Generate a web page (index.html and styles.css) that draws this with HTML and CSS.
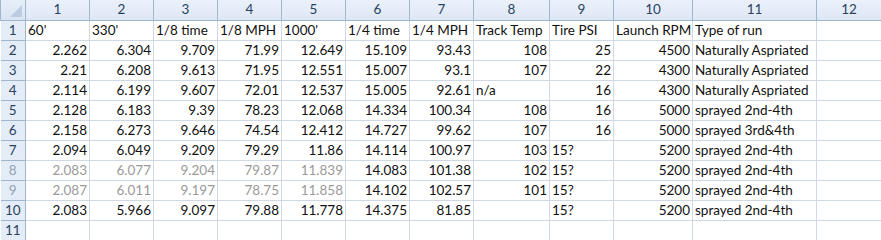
FILE: index.html
```html
<!DOCTYPE html>
<html>
<head>
<meta charset="utf-8">
<link rel="stylesheet" href="styles.css">
</head>
<body>
<table class="sheet">
<colgroup>
<col class="c-rh"><col class="c-std"><col class="c-std"><col class="c-std"><col class="c-std"><col class="c-std"><col class="c-std"><col class="c-std"><col class="c-8"><col class="c-std"><col class="c-10"><col class="c-11"><col class="c-12">
</colgroup>
<thead>
<tr class="hdr">
<th class="corner"><span class="tri"></span></th>
<th>1</th><th>2</th><th>3</th><th>4</th><th>5</th><th>6</th><th>7</th><th>8</th><th>9</th><th>10</th><th>11</th><th>12</th>
</tr>
</thead>
<tbody>
<tr><th class="rh">1</th><td class="t">60'</td><td class="t">330'</td><td class="t">1/8 time</td><td class="t">1/8 MPH</td><td class="t">1000'</td><td class="t">1/4 time</td><td class="t">1/4 MPH</td><td class="t">Track Temp</td><td class="t">Tire PSI</td><td class="t">Launch RPM</td><td class="t">Type of run</td><td></td></tr>
<tr><th class="rh">2</th><td>2.262</td><td>6.304</td><td>9.709</td><td>71.99</td><td>12.649</td><td>15.109</td><td>93.43</td><td>108</td><td>25</td><td>4500</td><td class="t">Naturally Aspriated</td><td></td></tr>
<tr><th class="rh">3</th><td>2.21</td><td>6.208</td><td>9.613</td><td>71.95</td><td>12.551</td><td>15.007</td><td>93.1</td><td>107</td><td>22</td><td>4300</td><td class="t">Naturally Aspriated</td><td></td></tr>
<tr><th class="rh">4</th><td>2.114</td><td>6.199</td><td>9.607</td><td>72.01</td><td>12.537</td><td>15.005</td><td>92.61</td><td class="t">n/a</td><td>16</td><td>4300</td><td class="t">Naturally Aspriated</td><td></td></tr>
<tr><th class="rh">5</th><td>2.128</td><td>6.183</td><td>9.39</td><td>78.23</td><td>12.068</td><td>14.334</td><td>100.34</td><td>108</td><td>16</td><td>5000</td><td class="t">sprayed 2nd-4th</td><td></td></tr>
<tr><th class="rh">6</th><td>2.158</td><td>6.273</td><td>9.646</td><td>74.54</td><td>12.412</td><td>14.727</td><td>99.62</td><td>107</td><td>16</td><td>5000</td><td class="t">sprayed 3rd&amp;4th</td><td></td></tr>
<tr><th class="rh">7</th><td>2.094</td><td>6.049</td><td>9.209</td><td>79.29</td><td>11.86</td><td>14.114</td><td>100.97</td><td>103</td><td class="t">15?</td><td>5200</td><td class="t">sprayed 2nd-4th</td><td></td></tr>
<tr class="dash"><th class="rh faded">8</th><td class="g">2.083</td><td class="g">6.077</td><td class="g">9.204</td><td class="g">79.87</td><td class="g">11.839</td><td>14.083</td><td>101.38</td><td>102</td><td class="t">15?</td><td>5200</td><td class="t">sprayed 2nd-4th</td><td></td></tr>
<tr><th class="rh faded">9</th><td class="g">2.087</td><td class="g">6.011</td><td class="g">9.197</td><td class="g">78.75</td><td class="g">11.858</td><td>14.102</td><td>102.57</td><td>101</td><td class="t">15?</td><td>5200</td><td class="t">sprayed 2nd-4th</td><td></td></tr>
<tr><th class="rh">10</th><td>2.083</td><td>5.966</td><td>9.097</td><td>79.88</td><td>11.778</td><td>14.375</td><td>81.85</td><td></td><td class="t">15?</td><td>5200</td><td class="t">sprayed 2nd-4th</td><td></td></tr>
<tr><th class="rh">11</th><td></td><td></td><td></td><td></td><td></td><td></td><td></td><td></td><td></td><td></td><td></td><td></td></tr>
</tbody>
</table>
</body>
</html>
```

FILE: styles.css
```css
html, body {
  margin: 0;
  padding: 0;
  background: #ffffff;
}

.sheet {
  border-collapse: collapse;
  table-layout: fixed;
  width: 881px;
  font-family: Lato, "Liberation Sans", sans-serif;
  font-size: 13.5px;
  color: #111;
}

.c-rh { width: 25px; }
.c-std { width: 64px; }
.c-8 { width: 76px; }
.c-10 { width: 79px; }
.c-11 { width: 124px; }
.c-12 { width: 65px; }

.sheet tr {
  height: 20px;
}

.sheet td {
  height: 19px;
  padding: 0 2px 0 2px;
  border: 1px solid #d0d7e5;
  text-align: right;
  white-space: nowrap;
  overflow: visible;
  line-height: 19px;
}

.sheet td.t {
  text-align: left;
}

.sheet td.g {
  color: #9a9a9a;
}

.hdr th {
  height: 19px;
  padding: 0;
  font-weight: normal;
  text-align: center;
  color: #2a4260;
  background: linear-gradient(#eaf1fa, #dde7f4);
  border: 1px solid #9eb6ce;
  border-top: none;
  line-height: 19px;
}

.hdr th.corner {
  position: relative;
  background: linear-gradient(#e6eef8, #d9e4f2);
}

.tri {
  position: absolute;
  right: 3px;
  bottom: 3px;
  width: 0;
  height: 0;
  border-left: 12px solid transparent;
  border-bottom: 12px solid #bccbde;
}

.sheet th.rh {
  padding: 0;
  font-weight: normal;
  text-align: center;
  color: #2a4260;
  background: #e4ecf7;
  border: 1px solid #9eb6ce;
  border-left: none;
  line-height: 19px;
}

.sheet th.rh.faded {
  color: #93a3b5;
}

.dash td {
  border-bottom: 1px dashed #c8c8c8;
}
```
